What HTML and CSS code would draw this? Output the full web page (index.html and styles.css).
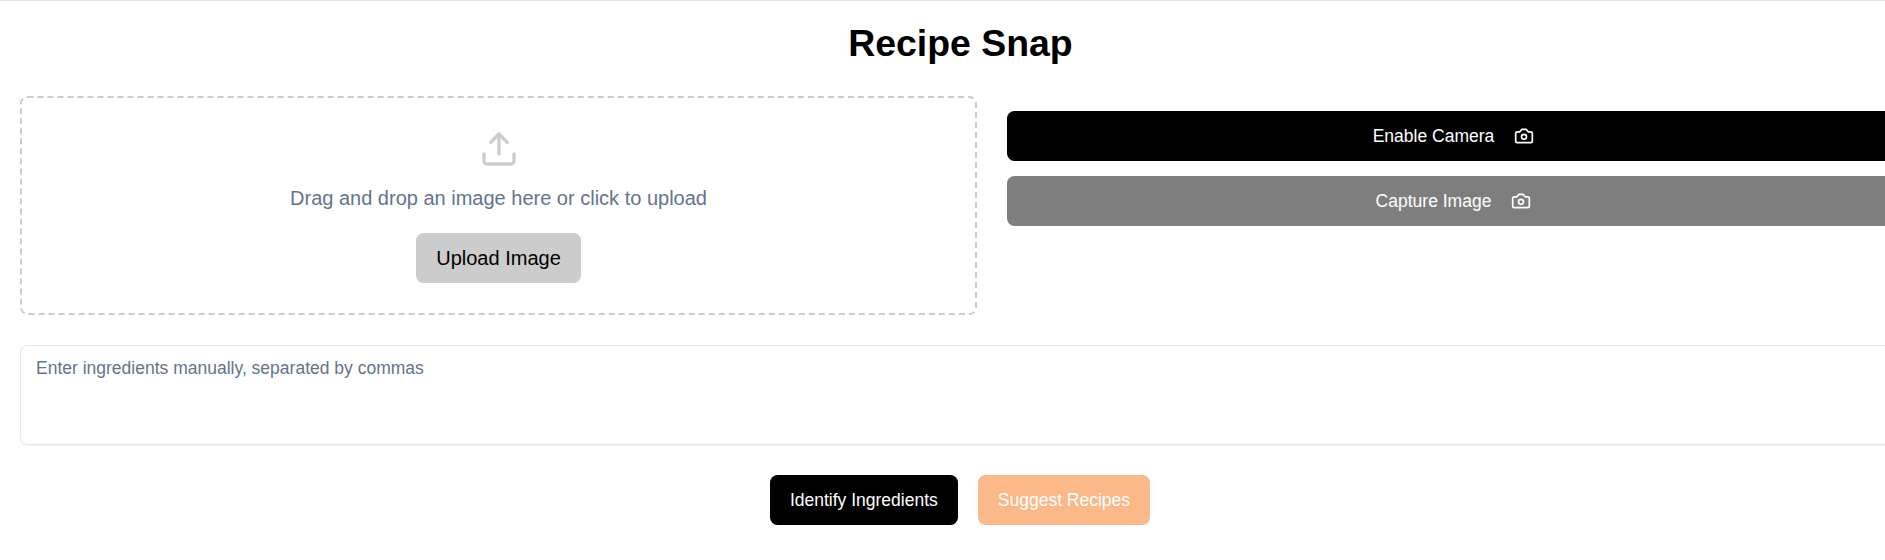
FILE: index.html
```html
<!DOCTYPE html>
<html lang="en">
<head>
<meta charset="utf-8">
<title>Recipe Snap</title>
<link rel="stylesheet" href="styles.css">
</head>
<body>
<main class="page">
  <h1 class="title">Recipe Snap</h1>
  <div class="sources">
    <section class="dropzone">
      <svg class="upload-icon" viewBox="0 0 24 24"><path d="M21 15v4a2 2 0 0 1-2 2H5a2 2 0 0 1-2-2v-4"/><polyline points="17 8 12 3 7 8"/><line x1="12" x2="12" y1="3" y2="15"/></svg>
      <p class="hint">Drag and drop an image here or click to upload</p>
      <button class="upload-btn">Upload Image</button>
    </section>
    <section class="camera">
      <button class="btn btn-wide">Enable Camera
        <svg class="camera-icon" viewBox="0 0 24 24"><path d="M14.500 4h-5L7 7H4a2 2 0 0 0-2 2v9a2 2 0 0 0 2 2h16a2 2 0 0 0 2-2V9a2 2 0 0 0-2-2h-3l-2.500-3z"/><circle cx="12" cy="13" r="3"/></svg>
      </button>
      <button class="btn btn-wide is-disabled">Capture Image
        <svg class="camera-icon" viewBox="0 0 24 24"><path d="M14.500 4h-5L7 7H4a2 2 0 0 0-2 2v9a2 2 0 0 0 2 2h16a2 2 0 0 0 2-2V9a2 2 0 0 0-2-2h-3l-2.500-3z"/><circle cx="12" cy="13" r="3"/></svg>
      </button>
    </section>
  </div>
  <textarea class="ingredients" placeholder="Enter ingredients manually, separated by commas"></textarea>
  <div class="actions">
    <button class="btn identify">Identify Ingredients</button>
    <button class="btn suggest is-disabled">Suggest Recipes</button>
  </div>
</main>
</body>
</html>
```
FILE: styles.css
```css
* { box-sizing: border-box; margin: 0; }

html { overflow: hidden; }

body {
  overflow: hidden;
  background: #fff;
  font-family: "Liberation Sans", Arial, sans-serif;
}

.page {
  width: 1920px;
  height: 560px;
  padding: 20.3px 20px 0;
  border-top: 1px solid #e5e5e5;
}

.title {
  height: 45px;
  margin-bottom: 30px;
  padding-left: 1px;
  font-size: 37.4px;
  line-height: 45px;
  font-weight: 700;
  text-align: center;
}

.sources {
  display: grid;
  grid-template-columns: 957px 893px;
  gap: 30px;
  margin-bottom: 30px;
}

.dropzone {
  display: flex;
  flex-direction: column;
  align-items: center;
  height: 219px;
  padding: 31px 0 29px;
  border: 2px dashed #ccc;
  border-radius: 7.5px;
}

.upload-icon, .camera-icon {
  fill: none;
  stroke: currentColor;
  stroke-width: 2;
  stroke-linecap: round;
  stroke-linejoin: round;
}

.upload-icon { width: 40px; height: 40px; color: #ccc; }

.hint {
  margin: 14px 0 20px;
  color: #64748b;
  font-size: 20px;
  line-height: 30px;
}

.upload-btn {
  height: 50px;
  padding: 0 20px;
  border: 0;
  border-radius: 7.5px;
  background: #ccc;
  color: #000;
  font: 20px/30px "Liberation Sans", Arial, sans-serif;
}

.camera {
  display: flex;
  flex-direction: column;
  gap: 15px;
  padding-top: 15px;
}

.btn {
  display: flex;
  align-items: center;
  justify-content: center;
  gap: 20px;
  height: 50px;
  padding: 0 20px;
  border: 0;
  border-radius: 7.5px;
  background: #000;
  color: #fff;
  font: 17.5px/25px "Liberation Sans", Arial, sans-serif;
}

.btn-wide { width: 100%; }
.is-disabled { opacity: .5; }
.camera-icon { width: 20px; height: 20px; }

.ingredients {
  display: block;
  width: 1880px;
  height: 100px;
  padding: 10px 15px;
  border: 1.250px solid #e2e8f0;
  border-radius: 7.5px;
  box-shadow: 0 1px 2px rgba(0, 0, 0, .05);
  resize: none;
  font: 17.5px/25px "Liberation Sans", Arial, sans-serif;
}

.ingredients::placeholder { color: #64748b; }

.actions {
  display: flex;
  justify-content: center;
  gap: 20px;
  margin-top: 30px;
}

.suggest { background: #f97316; }
```
